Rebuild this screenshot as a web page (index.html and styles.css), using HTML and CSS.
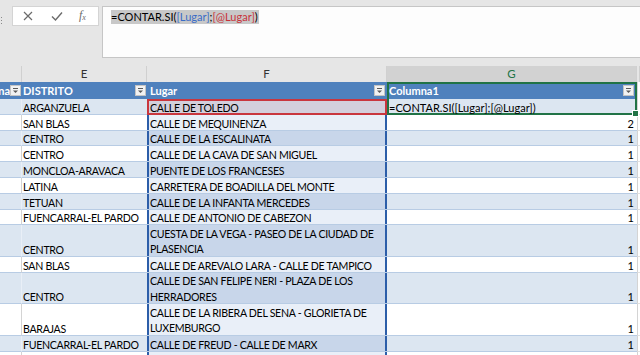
FILE: index.html
```html
<!DOCTYPE html>
<html lang="es">
<head>
<meta charset="utf-8">
<title>CONTAR.SI</title>
<link rel="stylesheet" href="styles.css">
</head>
<body>
<div class="formula-bar">
	<div class="grip">
		<svg width="3" height="8" viewBox="0 0 3 8"><rect x="1" y="1" width="1" height="1"/><rect x="1" y="4" width="1" height="1"/><rect x="1" y="7" width="1" height="1"/></svg>
	</div>
	<div class="fx-buttons">
		<svg class="ico ico-x" width="10" height="10" viewBox="0 0 10 10"><path d="M1 1L9 9M9 1L1 9"/></svg>
		<svg class="ico ico-ok" width="12" height="10" viewBox="0 0 12 10"><path d="M1 5.5L4.5 9L11 1.5"/></svg>
		<span class="fx">f<sub>x</sub></span>
	</div>
	<div class="formula-input"><span class="sel">=CONTAR.SI(<span class="ref-blue">[Lugar]</span>;<span class="ref-red">[@Lugar]</span>)</span></div>
</div>

<div class="sheet">
	<div class="row col-heads">
		<div class="ch"></div>
		<div class="ch">E</div>
		<div class="ch">F</div>
		<div class="ch ch-sel">G</div>
		<div class="ch"></div>
	</div>

	<div class="row thead">
		<div class="th th-d"><span class="th-text">na</span><span class="flt"><svg width="9" height="9" viewBox="0 0 9 9"><rect x="2" y="2" width="5" height="1"/><path d="M2 4.5h5L4.5 7z"/></svg></span></div>
		<div class="th"><span class="th-text">DISTRITO</span><span class="flt"><svg width="9" height="9" viewBox="0 0 9 9"><rect x="2" y="2" width="5" height="1"/><path d="M2 4.5h5L4.5 7z"/></svg></span></div>
		<div class="th th-f"><span class="th-text">Lugar</span><span class="flt"><svg width="9" height="9" viewBox="0 0 9 9"><rect x="2" y="2" width="5" height="1"/><path d="M2 4.5h5L4.5 7z"/></svg></span></div>
		<div class="th th-g"><span class="th-text">Columna1</span><span class="flt"><svg width="9" height="9" viewBox="0 0 9 9"><rect x="2" y="2" width="5" height="1"/><path d="M2 4.5h5L4.5 7z"/></svg></span></div>
		<div class="th th-h"></div>
	</div>

	<div class="row band">
		<div class="c d"></div><div class="c e">ARGANZUELA</div><div class="c f ref-cell">CALLE DE TOLEDO</div><div class="c g active">=CONTAR.SI([Lugar];[@Lugar])</div><div class="c h"></div>
	</div>
	<div class="row plain">
		<div class="c d"></div><div class="c e">SAN BLAS</div><div class="c f">CALLE DE MEQUINENZA</div><div class="c g num">2</div><div class="c h"></div>
	</div>
	<div class="row band">
		<div class="c d"></div><div class="c e">CENTRO</div><div class="c f">CALLE DE LA ESCALINATA</div><div class="c g num">1</div><div class="c h"></div>
	</div>
	<div class="row plain">
		<div class="c d"></div><div class="c e">CENTRO</div><div class="c f">CALLE DE LA CAVA DE SAN MIGUEL</div><div class="c g num">1</div><div class="c h"></div>
	</div>
	<div class="row band">
		<div class="c d"></div><div class="c e">MONCLOA-ARAVACA</div><div class="c f">PUENTE DE LOS FRANCESES</div><div class="c g num">1</div><div class="c h"></div>
	</div>
	<div class="row plain">
		<div class="c d"></div><div class="c e">LATINA</div><div class="c f">CARRETERA DE BOADILLA DEL MONTE</div><div class="c g num">1</div><div class="c h"></div>
	</div>
	<div class="row band">
		<div class="c d"></div><div class="c e">TETUAN</div><div class="c f">CALLE DE LA INFANTA MERCEDES</div><div class="c g num">1</div><div class="c h"></div>
	</div>
	<div class="row plain">
		<div class="c d"></div><div class="c e">FUENCARRAL-EL PARDO</div><div class="c f">CALLE DE ANTONIO DE CABEZON</div><div class="c g num">1</div><div class="c h"></div>
	</div>
	<div class="row band tall">
		<div class="c d"></div><div class="c e">CENTRO</div><div class="c f"><span class="wrap">CUESTA DE LA VEGA - PASEO DE LA CIUDAD DE<br>PLASENCIA</span></div><div class="c g num">1</div><div class="c h"></div>
	</div>
	<div class="row plain">
		<div class="c d"></div><div class="c e">SAN BLAS</div><div class="c f">CALLE DE AREVALO LARA - CALLE DE TAMPICO</div><div class="c g num">1</div><div class="c h"></div>
	</div>
	<div class="row band tall">
		<div class="c d"></div><div class="c e">CENTRO</div><div class="c f"><span class="wrap">CALLE DE SAN FELIPE NERI - PLAZA DE LOS<br>HERRADORES</span></div><div class="c g num">1</div><div class="c h"></div>
	</div>
	<div class="row plain tall">
		<div class="c d"></div><div class="c e">BARAJAS</div><div class="c f"><span class="wrap">CALLE DE LA RIBERA DEL SENA - GLORIETA DE<br>LUXEMBURGO</span></div><div class="c g num">1</div><div class="c h"></div>
	</div>
	<div class="row band">
		<div class="c d"></div><div class="c e">FUENCARRAL-EL PARDO</div><div class="c f">CALLE DE FREUD - CALLE DE MARX</div><div class="c g num">1</div><div class="c h"></div>
	</div>
	<div class="row plain">
		<div class="c d"></div><div class="c e"></div><div class="c f"></div><div class="c g"></div><div class="c h"></div>
	</div>
</div>
</body>
</html>
```

FILE: styles.css
```css
* {
	box-sizing: border-box;
}
html, body {
	margin: 0;
}
body {
	width: 640px;
	height: 355px;
	overflow: hidden;
	background: #e6e6e6;
	font-family: Lato, "Open Sans", sans-serif;
	font-size: 11px;
	color: #000;
}

/* formula bar */
.formula-bar {
	display: flex;
	align-items: flex-start;
	height: 66px;
	padding-top: 6px;
}
.grip {
	width: 12px;
	padding-top: 7px;
	fill: #8a8a8a;
}
.fx-buttons {
	display: flex;
	align-items: center;
	width: 87px;
	height: 20px;
	background: #fff;
	border: 1px solid #d4d4d4;
}
.ico {
	fill: none;
	stroke: #6b6b6b;
	stroke-width: 1.2;
}
.ico-x {
	margin-left: 10px;
}
.ico-ok {
	margin-left: 18px;
	stroke-width: 1.4;
}
.fx {
	margin-left: 16px;
	font-family: "Liberation Serif", serif;
	font-style: italic;
	font-size: 12px;
	color: #6b6b6b;
	line-height: 12px;
}
.fx sub {
	font-size: 8px;
	vertical-align: -1px;
}
.formula-input {
	flex: 1;
	height: 52px;
	margin-left: 3px;
	margin-right: -4px;
	padding: 3px 0 0 8px;
	background: #fdfdfd;
	border: 1px solid #c6c6c6;
}
.sel {
	display: inline-block;
	line-height: 14px;
	background: #c8c8c8;
	padding-right: 1px;
}
.ref-blue {
	color: #3a6cc6;
}
.ref-red {
	color: #c8323a;
}

/* sheet */
.row {
	display: grid;
	grid-template-columns: 22px 125px 240px 250px 3px;
	grid-template-rows: 100%;
	height: 15.8px;
}
.row.tall {
	height: 31.6px;
}

.col-heads {
	height: 16px;
}
.ch {
	border-right: 1px solid #d0d0d0;
	text-align: center;
	line-height: 15px;
	color: #333;
	font-size: 11.5px;
}
.ch-sel {
	background: #d2d2d2;
	color: #217346;
}

.thead {
	height: 17px;
}
.th {
	display: flex;
	align-items: center;
	justify-content: space-between;
	padding: 0 1px 0 1px;
	background: #4f81bd;
	color: #fff;
	font-weight: bold;
	white-space: nowrap;
	overflow: hidden;
}
.th-d {
	justify-content: flex-end;
}
.th-d .th-text {
	margin-left: -3px;
}
.th-f {
	padding-left: 3px;
	padding-right: 2px;
}
.th-g {
	padding-left: 2px;
	padding-right: 3px;
	box-shadow: inset 2px 0 #217346, inset -2px 0 #217346, inset 0 2px #217346;
}
.th-h {
	background: #fff;
	border-left: 1px solid #d4d4d4;
}
.flt {
	display: flex;
	align-items: center;
	justify-content: center;
	width: 11px;
	height: 11px;
	background: #f2f2f2;
	border: 1px solid #c4c4c4;
	fill: #595959;
	flex: none;
}

.c {
	display: flex;
	align-items: flex-end;
	padding: 0 2px 0 1px;
	border-bottom: 1px solid #b8cce4;
	line-height: 12px;
	white-space: nowrap;
	overflow: hidden;
}
.c.e,
.c.f {
	font-size: 10.6px;
	letter-spacing: -0.3px;
}
.band .c {
	background: #dce6f1;
}
.plain .c {
	background: #fff;
}
.plain .d {
	border-right: 1px solid #d4d4d4;
}
.band .d {
	border-right: 1px solid #e9eff7;
}
.c.f {
	padding-left: 3px;
	box-shadow: inset 2px 0 #2c5ea9, inset -2px 0 #2c5ea9;
}
.band .f {
	background: #c8d6ea;
}
.plain .f {
	background: #e9eff8;
}
.band .f.ref-cell {
	background: #d3cfdc;
	border-bottom: 0;
	padding-bottom: 1px;
	box-shadow: inset 0 0 0 2px #c9363e;
}
.c.g {
	padding-left: 2px;
}
.num {
	justify-content: flex-end;
	padding-right: 3px;
}
.c.g.active {
	position: relative;
	overflow: visible;
	border-bottom: 0;
	padding-bottom: 1px;
	box-shadow: inset 2px 0 #217346, inset -2px 0 #217346, inset 0 -2px #217346;
}
.c.g.active::after {
	content: "";
	position: absolute;
	right: -2px;
	bottom: -2px;
	width: 5px;
	height: 5px;
	background: #217346;
	border: 1px solid #fff;
	z-index: 2;
}
.band .h,
.plain .h {
	background: #fff;
	border-left: 1px solid #d4d4d4;
	border-bottom: 1px solid #e0e0e0;
}
.wrap {
	white-space: nowrap;
	line-height: 15.6px;
	margin-bottom: -2px;
}
```
